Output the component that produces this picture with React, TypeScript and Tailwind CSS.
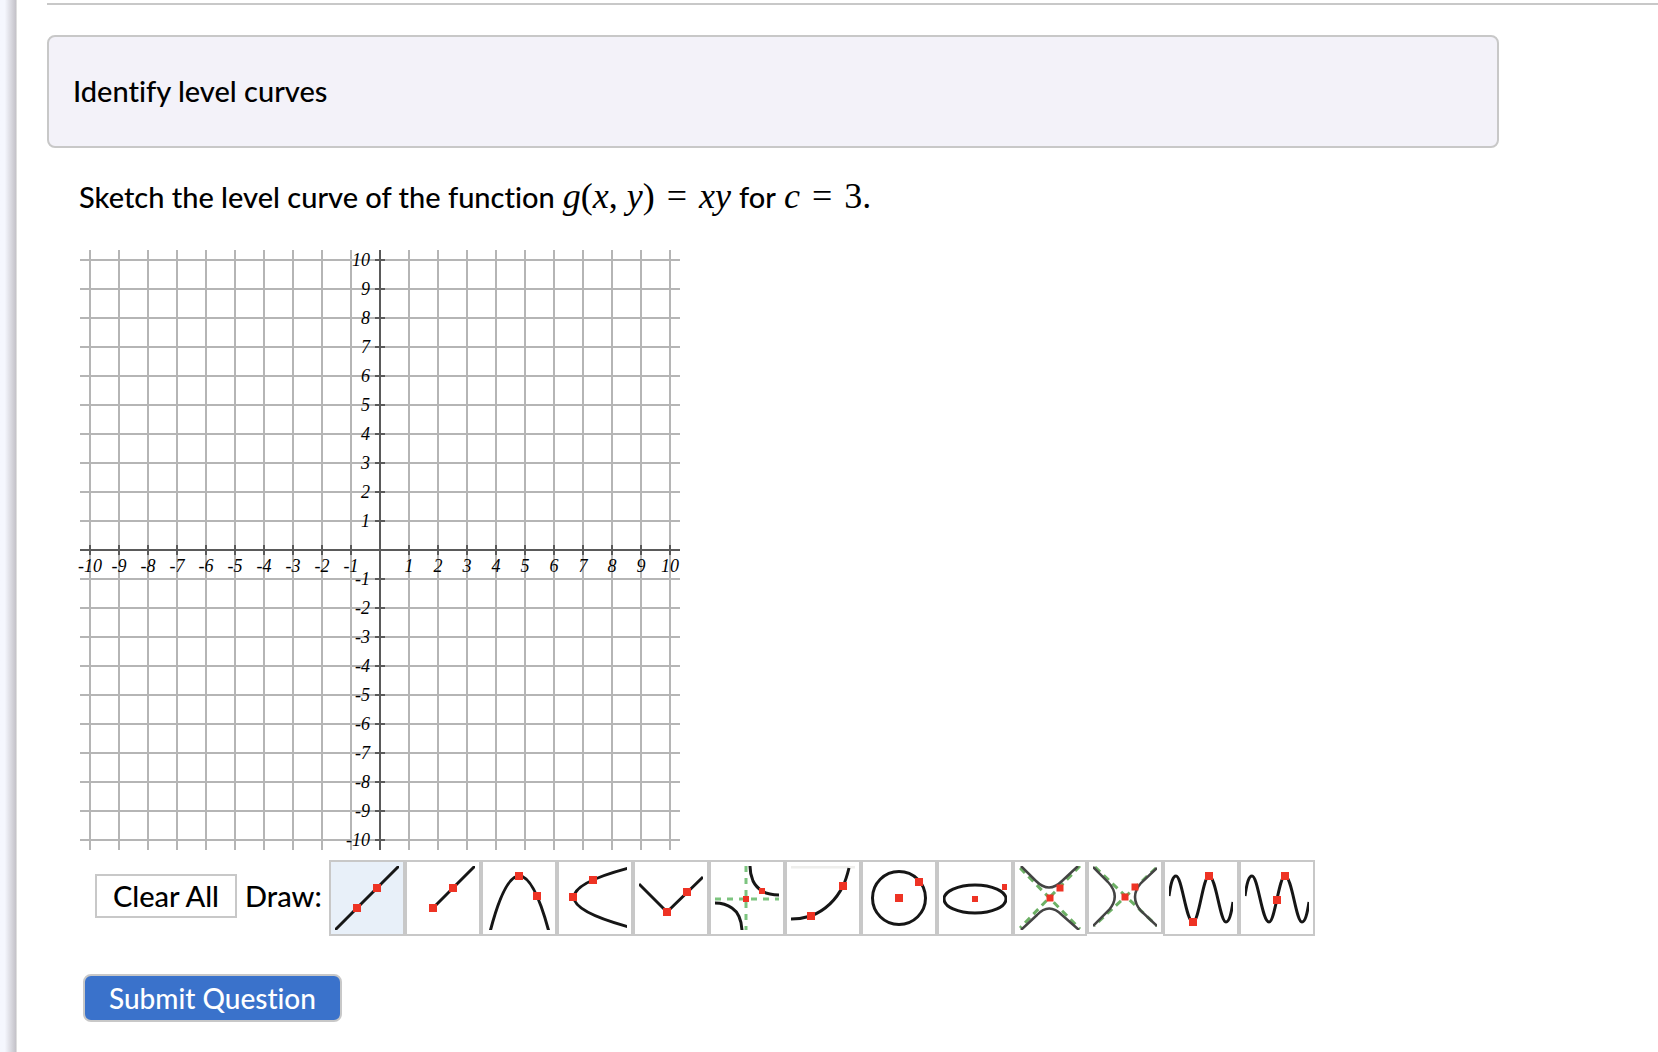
import { useState } from "react";
import type { ReactNode } from "react";

interface Tool {
  name: string;
  width?: number;
  height?: number;
  icon: ReactNode;
}

const STEP = 29;
const CENTER = 300;
const TICKS = Array.from({ length: 21 }, (_, i) => i - 10);

function Dot({ x, y, size = 8 }: { x: number; y: number; size?: number }) {
  return <rect x={x - size / 2} y={y - size / 2} width={size} height={size} fill="#ee3324" stroke="none" />;
}

const TOOLS: Tool[] = [
  {
    name: "Line",
    icon: (
      <>
        <path d="M0 64 64 0" />
        <Dot x={22} y={42} />
        <Dot x={42} y={22} />
      </>
    ),
  },
  {
    name: "Ray",
    icon: (
      <>
        <path d="M22 42 64 0" />
        <Dot x={22} y={42} />
        <Dot x={42} y={22} />
      </>
    ),
  },
  {
    name: "Parabola",
    icon: (
      <>
        <path d="M3 66Q32-46 62 66" />
        <Dot x={32} y={10} />
        <Dot x={50} y={30} />
      </>
    ),
  },
  {
    name: "Horizontal parabola",
    icon: (
      <>
        <path d="M66 2Q-44 31 66 61" />
        <Dot x={10} y={31} />
        <Dot x={30} y={14} />
      </>
    ),
  },
  {
    name: "Absolute value",
    icon: (
      <>
        <path d="M0 18 28 46 64 11" />
        <Dot x={28} y={46} />
        <Dot x={48} y={26} />
      </>
    ),
  },
  {
    name: "Rational",
    icon: (
      <>
        <path d="M31 0V64M0 33H64" stroke="#7cc47f" strokeDasharray="6 6" />
        <path d="M35 0Q35 8 38 15Q41 21 47 25Q54 29 64 29" />
        <path d="M0 37Q10 37 17 42Q26 48 27 64" />
        <Dot x={31} y={33} size={6} />
        <Dot x={47} y={25} size={6} />
      </>
    ),
  },
  {
    name: "Exponential",
    icon: (
      <>
        <path d="M0 1H64" stroke="#eeeeec" />
        <path d="M0 53Q10 53 20 50C35 44 46 32 52 20Q55 14 58 2" />
        <Dot x={20} y={50} />
        <Dot x={52} y={20} />
      </>
    ),
  },
  {
    name: "Circle",
    icon: (
      <>
        <circle cx="32" cy="32" r="26.5" />
        <Dot x={32} y={32} />
        <Dot x={52} y={16} />
      </>
    ),
  },
  {
    name: "Ellipse",
    icon: (
      <>
        <ellipse cx="32" cy="33" rx="31" ry="14" />
        <Dot x={32} y={33} size={6} />
        <Dot x={62} y={21} size={6} />
      </>
    ),
  },
  {
    name: "Vertical hyperbola",
    width: 62,
    icon: (
      <>
        <path d="M1 2 61 63M61 0 1 62" stroke="#6db065" strokeDasharray="7 5" />
        <path d="M2 0 17 15Q30 28 43 15L59 0M2 64 18 49Q30 36 43 49L60 64" stroke="#444" strokeWidth="2.5" />
        <Dot x={31} y={32} size={7} />
        <Dot x={41} y={22} size={7} />
      </>
    ),
  },
  {
    name: "Horizontal hyperbola",
    height: 62,
    icon: (
      <>
        <path d="M2 1 64 60M63 2 1 60" stroke="#6db065" strokeDasharray="7 5" />
        <path d="M0 1 15 16Q28 30 16 44L0 60M64 2 48 17Q36 31 48 45L64 60" stroke="#444" strokeWidth="2.5" />
        <Dot x={32} y={31} size={7} />
        <Dot x={42} y={21} size={7} />
      </>
    ),
  },
  {
    name: "Cosine",
    icon: (
      <>
        <path d="M0 30C2 16 4 10 7 10C13 10 17 56 24 56C30 56 34 10 40 10C47 10 51 56 57 56C60 56 62 49 64 36" />
        <Dot x={24} y={56} />
        <Dot x={40} y={10} />
      </>
    ),
  },
  {
    name: "Sine",
    icon: (
      <>
        <path d="M0 30C2 16 4 10 7 10C13 10 17 56 24 56C30 56 34 10 40 10C47 10 51 56 57 56C60 56 62 49 64 36" />
        <Dot x={32} y={34} />
        <Dot x={40} y={10} />
      </>
    ),
  },
];

function Grid() {
  return (
    <svg width="600" height="600" viewBox="0 0 600 600" className="block overflow-visible" role="img" aria-label="Coordinate grid">
      <g stroke="#b5b5b5" strokeWidth="2">
        {TICKS.map((n) => (
          <path key={n} d={`M${CENTER + n * STEP} 0V600M0 ${CENTER + n * STEP}H600`} />
        ))}
      </g>
      <g stroke="#5a5a5a" strokeWidth="2">
        <path d="M300 0V600M0 300H600" />
        {TICKS.map((n) => (
          <path key={n} d={`M${CENTER + n * STEP} 295v10M295 ${CENTER + n * STEP}h10`} />
        ))}
      </g>
      <g className="font-['Liberation_Serif',serif] text-[18px] italic" fill="#000">
        {TICKS.filter((n) => n !== 0).map((n) => (
          <g key={n}>
            <text x={CENTER + n * STEP} y={322} textAnchor="middle">{n}</text>
            <text x={290} y={CENTER - n * STEP + 6} textAnchor="end">{n}</text>
          </g>
        ))}
      </g>
    </svg>
  );
}

export default function App() {
  const [active, setActive] = useState("Line");

  return (
    <div className="flex min-h-screen bg-white font-['Lato',sans-serif] text-[29px] leading-9 font-medium text-black [font-variant-ligatures:none]">
      <div className="w-[17px] shrink-0 border-r border-[#dedede] bg-linear-to-r from-[#f5f7fe] from-30% to-[#c3c1c8]" />

      <main className="min-w-0 grow pt-[3px] pl-[30px]">
        <hr className="border-t-2 border-[#c8c8c8]" />

        <div className="mt-[30px] mr-[159px] rounded-lg border-2 border-[#c8c8c8] bg-[#f3f2f9] px-6 pt-9 pb-[37px]">
          <h1>Identify level curves</h1>
        </div>

        <div className="pl-8">
          <p className="mt-7 flex h-10 items-baseline whitespace-nowrap">
            Sketch the level curve of the function
            <span className="ml-2 flex gap-3 font-['Liberation_Serif',serif] text-[36px] leading-10">
              <span><i>g</i>(<i>x</i>, <i>y</i>)</span>
              <span>=</span>
              <i>xy</i>
            </span>
            <span className="mx-2">for</span>
            <span className="flex gap-3 font-['Liberation_Serif',serif] text-[36px] leading-10">
              <i>c</i>
              <span>=</span>
              <span>3.</span>
            </span>
          </p>

          <div className="mt-[34px] ml-px">
            <Grid />
          </div>

          <div className="mt-[10px] flex items-start pl-4">
            <button type="button" className="mt-[14px] h-11 border-2 border-[#c8c8c8] bg-white px-4 leading-10 whitespace-nowrap">
              Clear All
            </button>
            <span className="mt-[14px] ml-2 w-[84px] shrink-0 leading-11">Draw:</span>
            <div className="flex items-start">
              {TOOLS.map(({ name, width = 64, height = 64, icon }) => (
                <button
                  key={name}
                  type="button"
                  aria-label={name}
                  aria-pressed={active === name}
                  onClick={() => setActive(name)}
                  className={`shrink-0 border-2 border-[#c8c8c8] p-1 ${active === name ? "bg-[#e8f0f9]" : "bg-white"}`}
                >
                  <svg width={width} height={height} viewBox={`0 0 ${width} ${height}`} className="block" fill="none" stroke="#161616" strokeWidth="3">
                    {icon}
                  </svg>
                </button>
              ))}
            </div>
          </div>

          <button type="button" className="mt-[38px] ml-1 block h-12 rounded-lg border-2 border-[#c8c8c8] bg-[#3a72cb] px-6 text-[28px] text-white">
            Submit Question
          </button>
        </div>
      </main>
    </div>
  );
}
